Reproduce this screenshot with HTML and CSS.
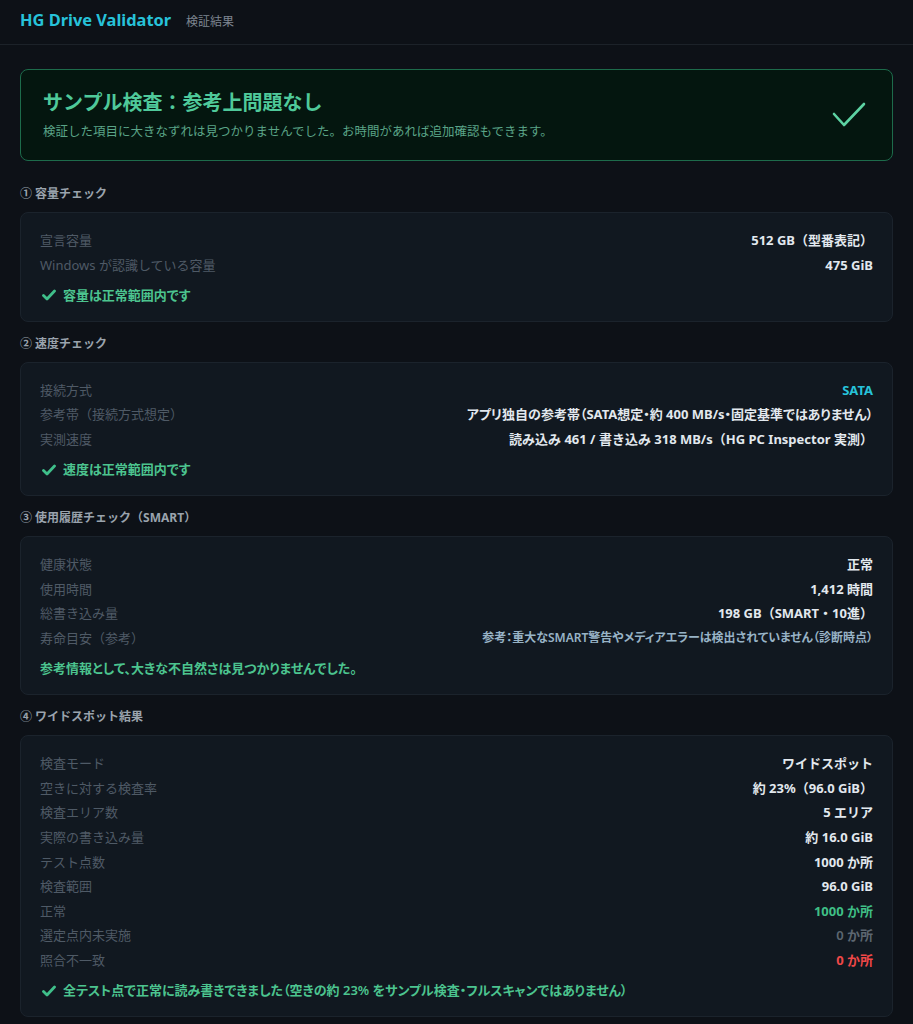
FILE: index.html
```html
<!DOCTYPE html>
<html lang="ja">
<head>
<meta charset="utf-8">
<title>HG Drive Validator - 検証結果</title>
<link rel="stylesheet" href="styles.css">
</head>
<body>
<header class="topbar">
  <span class="app-title">HG Drive Validator</span>
  <span class="app-sub">検証結果</span>
</header>
<main class="main">
  <section class="banner">
    <div class="banner-text">
      <div class="banner-title">サンプル検査：参考上問題なし</div>
      <div class="banner-desc">検証した項目に大きなずれは見つかりませんでした。お時間があれば追加確認もできます。</div>
    </div>
    <svg class="banner-check" width="34" height="26" viewBox="0 0 34 26"><polyline points="2,12 12,23 32,2" fill="none" stroke="#5dd3a3" stroke-width="2.6" stroke-linecap="round" stroke-linejoin="round"/></svg>
  </section>

  <section class="section">
    <div class="section-label">① 容量チェック</div>
    <div class="card">
      <div class="row"><span class="k">宣言容量</span><span class="v">512 GB（型番表記）</span></div>
      <div class="row"><span class="k">Windows が認識している容量</span><span class="v">475 GiB</span></div>
      <div class="ok"><svg class="tick" width="14" height="12" viewBox="0 0 14 12"><polyline points="1.5,6.5 5,10 12.5,2" fill="none" stroke="#3fbf8a" stroke-width="2.8" stroke-linecap="round" stroke-linejoin="round"/></svg><span>容量は正常範囲内です</span></div>
    </div>
  </section>

  <section class="section">
    <div class="section-label">② 速度チェック</div>
    <div class="card">
      <div class="row"><span class="k">接続方式</span><span class="v cyan">SATA</span></div>
      <div class="row"><span class="k">参考帯（接続方式想定）</span><span class="v tight">アプリ独自の参考帯（SATA想定・約 400 MB/s・固定基準ではありません）</span></div>
      <div class="row"><span class="k">実測速度</span><span class="v">読み込み 461 / 書き込み 318 MB/s（HG PC Inspector 実測）</span></div>
      <div class="ok"><svg class="tick" width="14" height="12" viewBox="0 0 14 12"><polyline points="1.5,6.5 5,10 12.5,2" fill="none" stroke="#3fbf8a" stroke-width="2.8" stroke-linecap="round" stroke-linejoin="round"/></svg><span>速度は正常範囲内です</span></div>
    </div>
  </section>

  <section class="section">
    <div class="section-label">③ 使用履歴チェック（SMART）</div>
    <div class="card">
      <div class="row"><span class="k">健康状態</span><span class="v">正常</span></div>
      <div class="row"><span class="k">使用時間</span><span class="v">1,412 時間</span></div>
      <div class="row"><span class="k">総書き込み量</span><span class="v">198 GB（SMART・10進）</span></div>
      <div class="row"><span class="k">寿命目安（参考）</span><span class="v note tight">参考：重大なSMART警告やメディアエラーは検出されていません（診断時点）</span></div>
      <div class="ok plain"><span>参考情報として、大きな不自然さは見つかりませんでした。</span></div>
    </div>
  </section>

  <section class="section">
    <div class="section-label">④ ワイドスポット結果</div>
    <div class="card">
      <div class="row"><span class="k">検査モード</span><span class="v">ワイドスポット</span></div>
      <div class="row"><span class="k">空きに対する検査率</span><span class="v">約 23%（96.0 GiB）</span></div>
      <div class="row"><span class="k">検査エリア数</span><span class="v">5 エリア</span></div>
      <div class="row"><span class="k">実際の書き込み量</span><span class="v">約 16.0 GiB</span></div>
      <div class="row"><span class="k">テスト点数</span><span class="v">1000 か所</span></div>
      <div class="row"><span class="k">検査範囲</span><span class="v">96.0 GiB</span></div>
      <div class="row"><span class="k">正常</span><span class="v green">1000 か所</span></div>
      <div class="row"><span class="k">選定点内未実施</span><span class="v muted">0 か所</span></div>
      <div class="row"><span class="k">照合不一致</span><span class="v red">0 か所</span></div>
      <div class="ok"><svg class="tick" width="14" height="12" viewBox="0 0 14 12"><polyline points="1.5,6.5 5,10 12.5,2" fill="none" stroke="#3fbf8a" stroke-width="2.8" stroke-linecap="round" stroke-linejoin="round"/></svg><span>全テスト点で正常に読み書きできました（空きの約 23% をサンプル検査・フルスキャンではありません）</span></div>
    </div>
  </section>
</main>
</body>
</html>
```

FILE: styles.css
```css
* { box-sizing: border-box; }

html, body {
  margin: 0;
  padding: 0;
  background: #0d1117;
}

body {
  font-family: "Noto Sans", "Noto Sans CJK JP", sans-serif;
  color: #e6edf3;
  font-size: 13px;
}

.topbar {
  height: 45px;
  border-bottom: 1px solid #1c2229;
  display: flex;
  align-items: baseline;
  gap: 15px;
  padding: 10px 20px 0;
}

.app-title {
  font-size: 16.4px;
  font-weight: 700;
  color: #27c3da;
  line-height: 20px;
}

.app-sub {
  font-size: 12px;
  color: #7d8590;
}

.main {
  padding: 24px 20px 0;
}

.banner {
  height: 92px;
  border: 1px solid #1d6b4b;
  background: #04160f;
  border-radius: 8px;
  display: flex;
  align-items: center;
  justify-content: space-between;
  padding: 0 26px 0 22px;
  margin-bottom: 24px;
}

.banner-title {
  font-size: 20px;
  font-weight: 700;
  line-height: 28px;
  color: #4fc99a;
}

.banner-desc {
  margin-top: 6px;
  font-size: 12.5px;
  line-height: 18px;
  color: #5aa487;
}

.section {
  margin-bottom: 13px;
}

.section-label {
  font-size: 12px;
  font-weight: 700;
  line-height: 16px;
  color: #9aa3ad;
  margin-bottom: 10px;
  padding-top: 1px;
}

.card {
  background: #111820;
  border: 1px solid #1b232c;
  border-radius: 8px;
  padding: 15px 19px 14px;
}

.row {
  display: flex;
  justify-content: space-between;
  align-items: center;
  height: 24.6px;
  line-height: 24.6px;
}

.k {
  color: #4f5a66;
  font-size: 13px;
}

.v {
  font-weight: 700;
  color: #e2e8ee;
  font-size: 13px;
}

.v.tight {
  font-feature-settings: "palt";
}

.v.cyan { color: #27c3da; }
.v.green { color: #3fbf86; }
.v.muted { color: #5c6670; font-weight: 600; }
.v.red { color: #f04848; }
.v.note {
  color: #98b3c6;
  font-size: 12px;
  font-weight: 600;
}

.ok {
  display: flex;
  align-items: center;
  gap: 7px;
  margin-top: 5px;
  height: 24.6px;
  padding-left: 2px;
  color: #4cc48f;
  font-weight: 600;
  font-size: 13px;
  font-feature-settings: "palt";
}

.ok.plain {
  padding-left: 0;
}

.tick {
  flex: none;
  margin-top: 2px;
}
```
